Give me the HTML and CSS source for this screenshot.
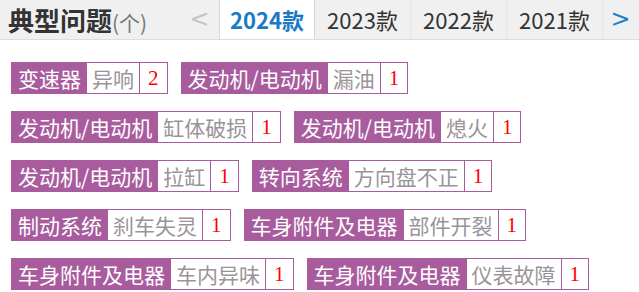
FILE: index.html
```html
<!DOCTYPE html>
<html lang="zh-CN">
<head>
    <meta charset="UTF-8">
    <meta name="viewport" content="width=device-width, initial-scale=1.0">
    <title>典型问题</title>
    <link rel="stylesheet" href="styles.css">
</head>
<body>
    <div class="head">
        <div class="title">典型问题<span class="unit">(个)</span></div>
        <div class="arrow prev">&lt;</div>
        <div class="tabs">
            <div class="tab active">2024款</div>
            <div class="tab">2023款</div>
            <div class="tab">2022款</div>
            <div class="tab">2021款</div>
        </div>
        <div class="arrow next">&gt;</div>
    </div>

    <div class="tags">
        <div class="tag"><span class="cat">变速器</span><span class="issue">异响</span><span class="num">2</span></div>
        <div class="tag"><span class="cat">发动机/电动机</span><span class="issue">漏油</span><span class="num">1</span></div>
        <div class="tag"><span class="cat">发动机/电动机</span><span class="issue">缸体破损</span><span class="num">1</span></div>
        <div class="tag"><span class="cat">发动机/电动机</span><span class="issue">熄火</span><span class="num">1</span></div>
        <div class="tag"><span class="cat">发动机/电动机</span><span class="issue">拉缸</span><span class="num">1</span></div>
        <div class="tag"><span class="cat">转向系统</span><span class="issue">方向盘不正</span><span class="num">1</span></div>
        <div class="tag"><span class="cat">制动系统</span><span class="issue">刹车失灵</span><span class="num">1</span></div>
        <div class="tag"><span class="cat">车身附件及电器</span><span class="issue">部件开裂</span><span class="num">1</span></div>
        <div class="tag"><span class="cat">车身附件及电器</span><span class="issue">车内异味</span><span class="num">1</span></div>
        <div class="tag"><span class="cat">车身附件及电器</span><span class="issue">仪表故障</span><span class="num">1</span></div>
    </div>
</body>
</html>
```

FILE: styles.css
```css
body {
    margin: 0;
    padding: 0;
    background: #fff;
    font-family: "Noto Sans CJK SC", "Noto Sans", sans-serif;
}
.head {
    display: flex;
    align-items: stretch;
    height: 39px;
    background: #f0f0f0;
    border-bottom: 1px solid #dcdcdc;
}
.title {
    width: 180px;
    padding-left: 8px;
    box-sizing: border-box;
    font-size: 26px;
    font-weight: bold;
    color: #333;
    line-height: 39px;
    white-space: nowrap;
}
.unit {
    font-size: 21px;
    font-weight: normal;
    color: #777;
}
.arrow {
    font-family: "DejaVu Sans", sans-serif;
    font-size: 24px;
    line-height: 39px;
    text-align: center;
}
.prev {
    width: 39px;
    color: #c4c4c4;
}
.next {
    width: 35px;
    color: #1a7fcc;
}
.tabs {
    display: flex;
}
.tab {
    width: 96px;
    text-align: center;
    font-size: 22px;
    line-height: 39px;
    color: #333;
    border-right: 1px solid #e6e6e6;
    box-sizing: border-box;
}
.tab.active {
    background: #fff;
    color: #1a7bc4;
    font-weight: bold;
    border-left: 1px solid #d6d6d6;
    border-right: 1px solid #d6d6d6;
}
.tags {
    display: flex;
    flex-wrap: wrap;
    gap: 17px 13px;
    padding: 22px 0 0 11px;
}
.tag {
    display: flex;
    border: 1px solid #a85c9e;
    font-size: 21px;
    line-height: 30px;
    white-space: nowrap;
}
.cat {
    background: #a85c9e;
    color: #fff;
    padding: 0 6px;
}
.issue {
    color: #9a939a;
    padding: 0 5px;
}
.num {
    font-family: "Liberation Serif", serif;
    color: #f00;
    padding: 0 8px;
    border-left: 1px solid #a85c9e;
}
```
